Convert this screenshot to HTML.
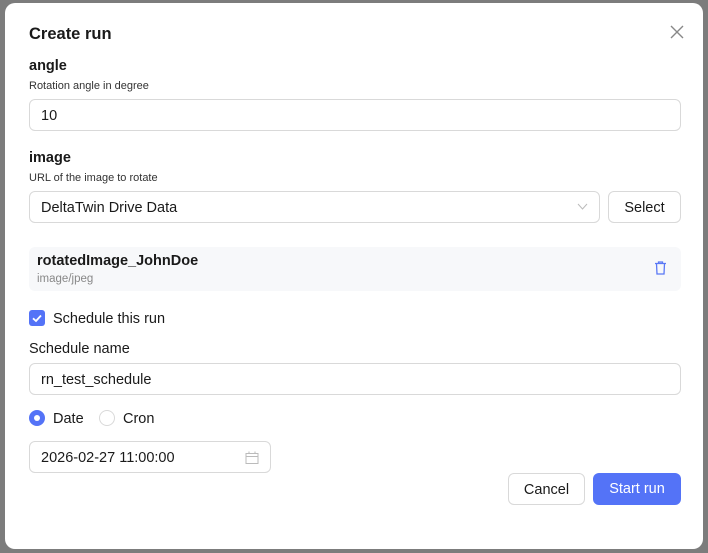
<!DOCTYPE html>
<html><head><style>
body{margin:0;width:708px;height:553px;background:#7c7c7c;font-family:"Liberation Sans",sans-serif;color:#1a1a1a;position:relative;overflow:hidden}
.m{position:absolute;left:5px;top:3px;width:698px;height:546px;background:#fff;border-radius:10px}
.a{position:absolute}
.in{position:absolute;border:1px solid #d9d9d9;border-radius:6px;box-sizing:border-box;font-size:14.5px;line-height:32px;padding-left:11px;background:#fff}
.lbl{font-size:14.5px;font-weight:bold}
.sm{font-size:11px;color:#333}
</style></head><body>
<div class="m"></div>
<div class="a" style="left:29px;top:25px;font-size:16.5px;font-weight:bold">Create run</div>
<svg class="a" style="left:670px;top:25px" width="14" height="14"><path d="M1 1L13 13M13 1L1 13" stroke="#888" stroke-width="1.4"/></svg>
<div class="a lbl" style="left:29px;top:58px">angle</div>
<div class="a sm" style="left:29px;top:80px">Rotation angle in degree</div>
<div class="in" style="left:29px;top:99px;width:652px;height:32px">10</div>
<div class="a lbl" style="left:29px;top:150px">image</div>
<div class="a sm" style="left:29px;top:172px">URL of the image to rotate</div>
<div class="in" style="left:29px;top:191px;width:571px;height:32px">DeltaTwin Drive Data</div>
<svg class="a" style="left:577px;top:203px" width="11" height="7"><path d="M1 1L5.5 6L10 1" stroke="#bbb" fill="none"/></svg>
<div class="in" style="left:608px;top:191px;width:73px;height:32px;padding:0;text-align:center">Select</div>
<div class="a" style="left:29px;top:247px;width:652px;height:44px;background:#f7f8fa;border-radius:6px"></div>
<div class="a" style="left:37px;top:253px;font-size:14.5px;font-weight:bold">rotatedImage_JohnDoe</div>
<div class="a" style="left:37px;top:273px;font-size:11.5px;color:#888">image/jpeg</div>
<svg class="a" style="left:654px;top:261px" width="13" height="14"><path d="M1 2.5H12M4.5 2.5V1H8.5V2.5M2.5 2.5L3 13H10L10.5 2.5" stroke="#5a78f5" stroke-width="1.3" fill="none"/></svg>
<div class="a" style="left:29px;top:310px;width:16px;height:16px;background:#5473f7;border-radius:3px"></div>
<svg class="a" style="left:29px;top:310px" width="16" height="16"><path d="M4 8.3L7 11L12 5.5" stroke="#fff" stroke-width="1.8" fill="none"/></svg>
<div class="a" style="left:53px;top:311px;font-size:14.5px">Schedule this run</div>
<div class="a" style="left:29px;top:341px;font-size:14.5px">Schedule name</div>
<div class="in" style="left:29px;top:363px;width:652px;height:32px">rn_test_schedule</div>
<div class="a" style="left:29px;top:410px;width:16px;height:16px;border-radius:50%;background:#5473f7"></div>
<div class="a" style="left:34px;top:415px;width:6px;height:6px;border-radius:50%;background:#fff"></div>
<div class="a" style="left:53px;top:411px;font-size:14.5px">Date</div>
<div class="a" style="left:99px;top:410px;width:14px;height:14px;border-radius:50%;border:1px solid #d9d9d9"></div>
<div class="a" style="left:123px;top:411px;font-size:14.5px">Cron</div>
<div class="in" style="left:29px;top:441px;width:242px;height:32px">2026-02-27 11:00:00</div>
<svg class="a" style="left:245px;top:451px" width="14" height="13"><rect x="1" y="2.5" width="12" height="10" stroke="#bbb" fill="none"/><path d="M1 5.5H13M4 0.5V3M10 0.5V3" stroke="#bbb"/></svg>
<div class="in" style="left:508px;top:473px;width:77px;height:32px;padding:0;text-align:center">Cancel</div>
<div class="a" style="left:593px;top:473px;width:88px;height:32px;background:#5473f7;border-radius:6px;color:#fff;font-size:14.5px;line-height:32px;text-align:center">Start run</div>
</body></html>
